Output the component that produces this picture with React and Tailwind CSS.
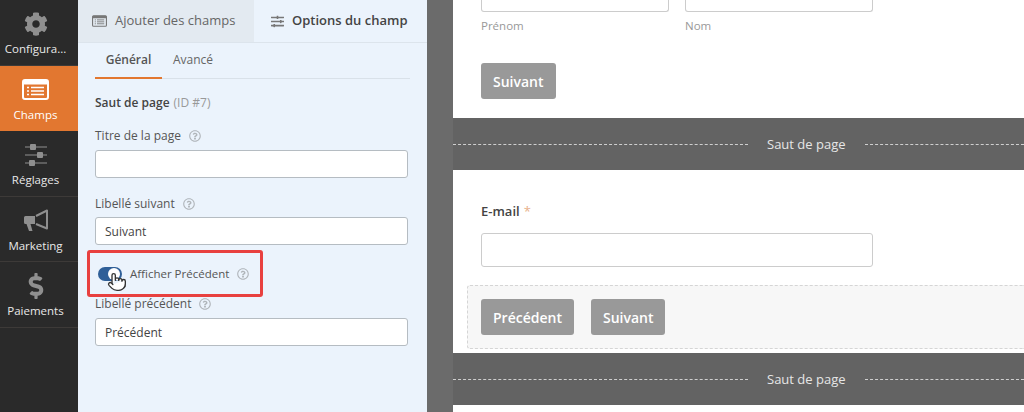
import React from 'react';
import { FaCog, FaRegQuestionCircle, FaDollarSign, FaSlidersH } from 'react-icons/fa';
import { Pointer } from 'lucide-react';

const FONT = { fontFamily: '"Open Sans", "Noto Sans", sans-serif' };

const FormIcon = ({ className = '', stroke = 'currentColor', line = 'currentColor' }) => (
  <svg viewBox="0 0 27 21" className={className}>
    <rect x="1" y="1" width="25" height="19" rx="2" fill="none" stroke={stroke} strokeWidth="2" />
    <rect x="1" y="1" width="25" height="4.5" rx="1.5" fill={stroke} />
    <path d="M5 8.5h2M9 8.5h13M5 12h2M9 12h13M5 15.5h2M9 15.5h13" stroke={line} strokeWidth="1.6" fill="none" />
  </svg>
);

const ThinSliders = ({ className = '' }) => (
  <svg viewBox="0 0 24 22" className={className}>
    <path d="M1 3h22M1 11h22M1 19h22" stroke="#8f8f8f" strokeWidth="1.2" fill="none" />
    <rect x="6" y="0" width="6" height="6" rx="1" fill="#8f8f8f" />
    <rect x="13" y="8" width="6" height="6" rx="1" fill="#8f8f8f" />
    <rect x="5" y="16" width="6" height="6" rx="1" fill="#8f8f8f" />
  </svg>
);

const Horn = ({ className = '' }) => (
  <svg viewBox="0 0 26 23" className={className}>
    <path d="M1 8.5a1.5 1.5 0 0 1 1.5-1.5H12v8H7.5l2 7H6l-2.5-7H2.5A1.5 1.5 0 0 1 1 13.5z" fill="#8f8f8f" />
    <path d="M13 7l11-5.5v18L13 15" fill="none" stroke="#8f8f8f" strokeWidth="2" strokeLinejoin="round" />
  </svg>
);

const navItems = [
  { label: 'Configura...', icon: <FaCog size={24} className="text-[#8f8f8f]" /> },
  { label: 'Champs', icon: <FormIcon className="w-[27px] h-[21px]" stroke="#fff" line="#fff" />, active: true },
  { label: 'Réglages', icon: <ThinSliders className="w-[24px] h-[22px]" /> },
  { label: 'Marketing', icon: <Horn className="w-[26px] h-[23px]" /> },
  { label: 'Paiements', icon: <FaDollarSign size={26} className="text-[#8f8f8f]" /> },
];

const Help = () => <FaRegQuestionCircle className="ml-2 text-[12px] text-[#b0b5ba]" />;

const Label = ({ children, className = '' }) => (
  <div className={`flex items-center h-4 text-[12px] text-[#555] ${className}`}>
    {children}
    <Help />
  </div>
);

const TextInput = ({ value, className = '' }) => (
  <div className={`flex items-center h-[28px] w-[313px] px-[9px] pt-px bg-white border border-[#b5bcc2] rounded-[3px] text-[12px] text-[#444] ${className}`}>
    {value}
  </div>
);

const GrayButton = ({ children }) => (
  <div className="flex items-center justify-center h-9 px-[12px] bg-[#999] rounded-[3px] text-white text-[14px] font-semibold">
    {children}
  </div>
);

const PageBreak = () => (
  <div className="flex items-center h-[52px] bg-[#636363]">
    <div className="w-[295px] border-t border-dashed border-[#cfcfcf]" />
    <span className="px-[19px] pt-px text-[13px] text-[#e6e6e6]">Saut de page</span>
    <div className="flex-1 border-t border-dashed border-[#cfcfcf]" />
  </div>
);

export default function App() {
  return (
    <div className="flex h-[412px] w-[1024px] overflow-hidden bg-white" style={FONT}>
      {/* sidebar */}
      <aside className="w-[78px] shrink-0 bg-[#2a2a2a]">
        {navItems.map(({ label, icon, active }) => (
          <div
            key={label}
            className={`flex flex-col items-center h-[65.5px] pt-[11px] pr-[7px] text-[11.5px] ${
              active ? 'bg-[#e27730] text-white' : 'border-b border-[#3d3a38] text-[#e8e8e8]'
            }`}
          >
            <div className="flex items-center justify-center h-[26px]">{icon}</div>
            <span className="mt-[4px] leading-4">{label}</span>
          </div>
        ))}
      </aside>

      {/* field options panel */}
      <section className="w-[349px] shrink-0 bg-[#ebf3fc]">
        <div className="flex h-[43px] border-b border-[#dce4ec]">
          <div className="flex items-center w-[176px] pl-[14px] bg-[#e3eaf1] text-[13px] text-[#666]">
            <FormIcon className="mr-2 w-[15px] h-[12px] text-[#777]" />
            Ajouter des champs
          </div>
          <div className="flex items-center flex-1 pl-[17px] text-[13px] font-semibold text-[#444]">
            <FaSlidersH className="mr-2 text-[13px] text-[#777]" />
            Options du champ
          </div>
        </div>

        <div className="pl-[17px] pr-[17px]">
          <div className="flex h-[36px] border-b border-[#d9e1e9] text-[12px]">
            <div className="flex items-center justify-center w-[67px] h-[36px] border-b-2 border-[#e27730] font-semibold text-[#555]">
              Général
            </div>
            <div className="flex items-center ml-[11px] h-[34px] text-[#666]">Avancé</div>
          </div>

          <div className="mt-[16px] h-4 flex items-center text-[12px] font-semibold text-[#444]">
            Saut de page
            <span className="ml-1 font-normal text-[#999]">(ID #7)</span>
          </div>

          <Label className="mt-[17px]">Titre de la page</Label>
          <TextInput className="mt-[6px]" />

          <Label className="mt-[18px]">Libellé suivant</Label>
          <TextInput className="mt-[5px]" value="Suivant" />

          <div className="relative flex items-center -ml-2 mt-[5px] h-[47px] w-[176px] pl-[8px] border-[3px] border-[#e8403f] rounded-[3px]">
            <div className="flex items-center justify-end w-[24px] h-[14px] pr-[2px] rounded-full bg-[#2f5f98]">
              <div className="w-[12px] h-[12px] rounded-full bg-white" />
            </div>
            <span className="ml-[8px] text-[11.5px] text-[#555]">Afficher Précédent</span>
            <Help />
            <Pointer size={20} strokeWidth={1.6} className="absolute left-[17px] top-[19px] fill-white text-[#333]" />
          </div>

          <Label className="-mt-px">Libellé précédent</Label>
          <TextInput className="mt-[6px]" value="Précédent" />
        </div>
      </section>

      <div className="w-[26px] shrink-0 bg-[#6b6b6b]" />

      {/* form preview */}
      <main className="flex-1 bg-white">
        <div className="h-[118px] pl-[28px]">
          <div className="flex gap-4">
            <div className="w-[188px]">
              <div className="h-[12px] border border-t-0 border-[#ccc] rounded-b-[3px]" />
              <div className="mt-[6px] h-4 flex items-center text-[11.5px] text-[#999]">Prénom</div>
            </div>
            <div className="w-[188px]">
              <div className="h-[12px] border border-t-0 border-[#ccc] rounded-b-[3px]" />
              <div className="mt-[6px] h-4 flex items-center text-[11.5px] text-[#999]">Nom</div>
            </div>
          </div>
          <div className="flex mt-[29px]">
            <GrayButton>Suivant</GrayButton>
          </div>
        </div>

        <PageBreak />

        <div className="h-[115px] pl-[28px] pt-[34px]">
          <div className="h-4 flex items-center text-[13px] font-semibold text-[#444]">
            E-mail
            <span className="ml-1 font-normal text-[#e8b08a]">*</span>
          </div>
          <div className="mt-[13px] h-[34px] w-[392px] border border-[#ccc] rounded-[3px]" />
        </div>

        <div className="flex gap-[17px] h-[64px] ml-[14px] px-[13px] pt-[13px] bg-[#f7f7f7] border border-r-0 border-dashed border-[#d5d5d5] rounded-l-[3px]">
          <GrayButton>Précédent</GrayButton>
          <GrayButton>Suivant</GrayButton>
        </div>

        <div className="mt-[4px]">
          <PageBreak />
        </div>
      </main>
    </div>
  );
}
